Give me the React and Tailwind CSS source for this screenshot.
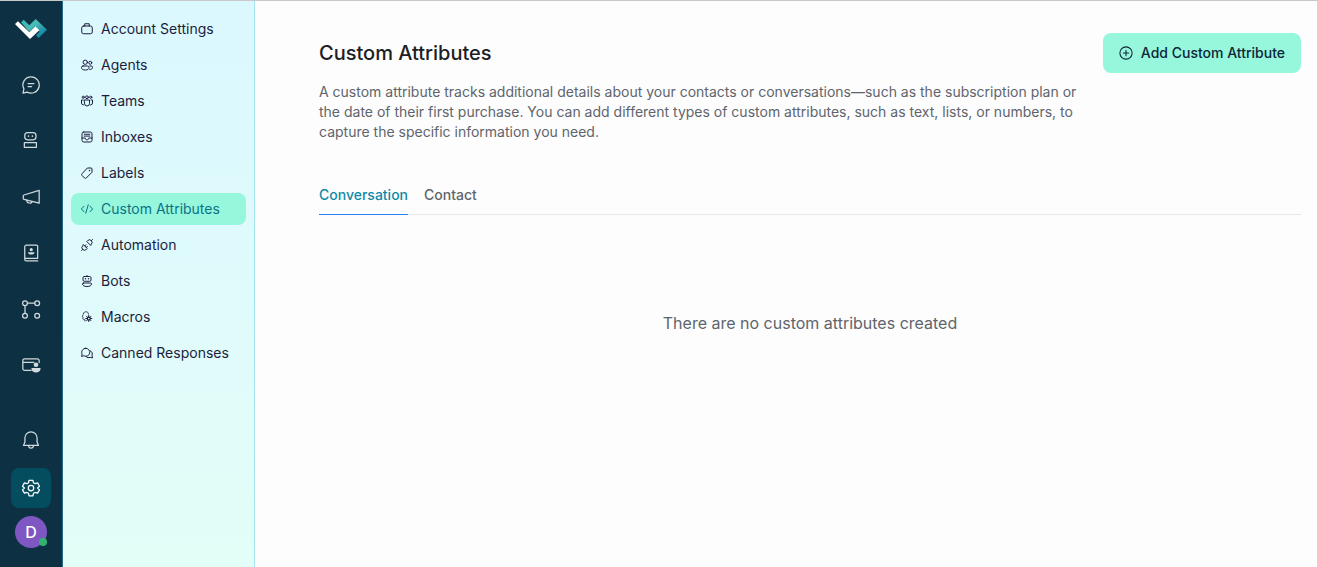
import React, { useState } from "react";

function Icon({ children, size = "size-5", width = 1.5 }) {
  return (
    <svg
      viewBox="0 0 24 24"
      className={`${size} shrink-0`}
      fill="none"
      stroke="currentColor"
      strokeWidth={width}
      strokeLinecap="round"
      strokeLinejoin="round"
      aria-hidden="true"
    >
      {children}
    </svg>
  );
}

const railItems = [
  {
    name: "Conversations",
    art: (
      <>
        <path d="M12 2.2a9.8 9.8 0 1 1-4.6 18.4L2.4 21.7l1.1-5A9.8 9.8 0 0 1 12 2.2Z" />
        <path d="M8.5 10.2h7M8.5 13.8h4.2" />
      </>
    ),
  },
  {
    name: "Captain",
    art: (
      <>
        <rect x="4.5" y="2" width="13.5" height="8.5" rx="3.5" />
        <path d="M4 14h14.500v5.500H4z" />
        <path d="M9 6.200v.1M13.700 6.200v.1" strokeWidth="2" />
      </>
    ),
  },
  {
    name: "Campaigns",
    art: (
      <>
        <path d="M21.8 4v15.4L3.6 14.8a1 1 0 0 1-.9-1v-3.2a1 1 0 0 1 .8-1L21.8 4Z" />
        <path d="M7 15.8a3.4 3.4 0 0 0 6.4 1.7" />
      </>
    ),
  },
  {
    name: "Contacts",
    art: (
      <>
        <path d="M20 17.5V4a1.5 1.5 0 0 0-1.5-1.5h-12A2 2 0 0 0 4.5 4.5v15a2 2 0 0 0 2 2H20M4.5 18.5H20v-1" />
        <circle cx="12.3" cy="8" r="1.9" fill="currentColor" stroke="none" />
        <path d="M8.5 11h7.6v.8c0 2.8-7.6 2.8-7.6 0Z" fill="currentColor" stroke="none" />
      </>
    ),
  },
  {
    name: "Flows",
    art: (
      <>
        <circle cx="4.8" cy="5" r="2.9" />
        <circle cx="19.4" cy="5" r="2.9" />
        <circle cx="4.8" cy="20" r="2.9" />
        <circle cx="19.4" cy="20" r="2.9" />
        <path d="M7.7 5h8.8M4.8 7.9v9.2" />
      </>
    ),
  },
  {
    name: "Portals",
    art: (
      <>
        <path d="M12 18.5H4.5a2.3 2.3 0 0 1-2.3-2.3V6.8a2.3 2.3 0 0 1 2.3-2.3h15a2.3 2.3 0 0 1 2.3 2.3V9M2.5 8.8h13" />
        <circle cx="18" cy="11.7" r="2.8" fill="currentColor" stroke="none" />
        <path d="M12.6 15.5h10.8v1.3c0 5.5-10.8 5.5-10.8 0Z" fill="currentColor" stroke="none" />
      </>
    ),
  },
];

const menuItems = [
  {
    name: "Account Settings",
    art: (
      <>
        <rect x="1.5" y="6" width="21" height="15.5" rx="3.5" />
        <path d="M7.5 6V1.500h9V6" />
      </>
    ),
  },
  {
    name: "Agents",
    art: (
      <>
        <circle cx="8.5" cy="6.5" r="4.3" />
        <circle cx="18.5" cy="7.5" r="3" />
        <path d="M4 14h9a3 3 0 0 1 3 3c0 3.5-3 5-7.5 5S1 20.5 1 17a3 3 0 0 1 3-3ZM17.5 14h3a2.5 2.5 0 0 1 2.5 2.5c0 3-2 4.5-5.5 4.5" />
      </>
    ),
  },
  {
    name: "Teams",
    art: (
      <>
        <circle cx="12" cy="4.5" r="2.800" />
        <circle cx="4.5" cy="4.5" r="2.2" />
        <circle cx="19.5" cy="4.5" r="2.2" />
        <path d="M7 10h10v7a5 5 0 0 1-10 0ZM4 10H1v6a4 4 0 0 0 4 4M20 10H23v6a4 4 0 0 1-4 4" />
      </>
    ),
  },
  {
    name: "Inboxes",
    art: (
      <>
        <rect x="2" y="2" width="20" height="20" rx="3.5" />
        <path d="M2 14h6.5c0 5 7 5 7 0H22M6.5 6.5h11M6.5 10.2h11" />
      </>
    ),
  },
  {
    name: "Labels",
    art: (
      <>
        <path d="M13.5 2H20a2 2 0 0 1 2 2v6.5L10.5 22a2.4 2.4 0 0 1-3.4 0L2 16.9a2.4 2.4 0 0 1 0-3.4Z" />
        <path d="M17 7v.1" strokeWidth="3" />
      </>
    ),
  },
  {
    name: "Custom Attributes",
    art: <path d="M6 6.5.8 12 6 17.5M18 6.5l5.2 5.5-5.2 5.5M14.5 3.5l-5 17" />,
  },
  {
    name: "Automation",
    art: (
      <>
        <path d="m5 11.500 7.500 7.500-1.800 1.800a5 5 0 0 1-7.400-7.400ZM19 12.500l-7.500-7.500 1.800-1.800a5 5 0 0 1 7.400 7.400Z" />
        <path d="M3.200 20.800 1 23M20.800 3.200 23 1M7.500 14l2.500-2.500M10.500 17l2.500-2.500" />
      </>
    ),
  },
  {
    name: "Bots",
    art: (
      <>
        <rect x="4" y="3" width="16" height="9.5" rx="2.5" />
        <path d="M12 3V1M5 16h14a2 2 0 0 1 2 2c0 3-3.5 5-9 5s-9-2-9-5a2 2 0 0 1 2-2Z" />
        <path d="M9 7.5v.1M15 7.5v.1" strokeWidth="3" />
      </>
    ),
  },
  {
    name: "Macros",
    art: (
      <>
        <path
          d="M8 20v-2.500H6a2 2 0 0 1-2-2V12l-1.500-1L4.500 7c.5-4 2.500-5.500 5.500-5.500S14.500 3 15 6.500"
          strokeDasharray="4 2"
          strokeWidth="1.700"
        />
        <circle cx="15.500" cy="15" r="3" strokeWidth="2.500" />
        <path
          d="M15.500 9v2.500M15.500 18.500V21M9.500 15H12M19 15h2.500M11.300 10.800l1.700 1.700M18 17.500l1.700 1.700M19.700 10.800 18 12.500M13 17.500l-1.700 1.700"
          strokeWidth="2"
        />
      </>
    ),
  },
  {
    name: "Canned Responses",
    art: (
      <>
        <path d="M9.5 2.5a8 8 0 1 1-3.8 15L1 18.8l1.3-4.5A8 8 0 0 1 9.5 2.5Z" />
        <path d="M18.5 7.5a7.3 7.3 0 0 1 3.6 9.8l.9 4.5-4.5-1a7.5 7.5 0 0 1-8.5-1.5" />
      </>
    ),
  },
];

function Logo() {
  return (
    <svg viewBox="0 0 96 60" className="h-5 w-8" role="img" aria-label="Home">
      <defs>
        <linearGradient id="brand" x1="0" y1="0" x2="1" y2="1">
          <stop offset="0" stopColor="#35b5b0" />
          <stop offset="0.4" stopColor="#4bbdb8" />
          <stop offset="0.9" stopColor="#067da0" />
        </linearGradient>
      </defs>
      <path d="m18 10 8-8 17 17L62 0l34 32-25 25-8-8 11-11-14-16-17 17Z" fill="url(#brand)" />
      <path d="m0 15 9-8 34 33 18-18 12 12-28 26Z" fill="#fff" />
    </svg>
  );
}

function Rail() {
  return (
    <nav
      aria-label="Main"
      className="flex w-[63px] shrink-0 flex-col items-center border-r border-[#256b88] bg-[#0d3042] pt-[18px] pb-[19px] text-[#d3dadd]"
    >
      <a href="#home">
        <Logo />
      </a>
      <div className="mt-[26px] flex flex-col gap-4">
        {railItems.map((item) => (
          <button
            key={item.name}
            type="button"
            aria-label={item.name}
            className="flex size-10 items-center justify-center rounded-lg"
          >
            <Icon>{item.art}</Icon>
          </button>
        ))}
      </div>
      <div className="mt-auto flex flex-col items-center gap-2">
        <button type="button" aria-label="Notifications" className="flex size-10 items-center justify-center rounded-lg">
          <Icon>
            <path d="M12 2.2a7.3 7.3 0 0 0-7.3 7.3v5L3 18.5h18l-1.7-4v-5A7.3 7.3 0 0 0 12 2.2ZM9 18.7a3 3 0 0 0 6 0" />
          </Icon>
        </button>
        <button
          type="button"
          aria-label="Settings"
          className="flex size-10 items-center justify-center rounded-lg bg-[#044c60] text-white"
        >
          <Icon>
            <path d="M9.7 2.7h4.6l.7 3 1.9 1.1 3-.9 2.3 4-2.3 2.1 2.3 2.2-2.3 4-3-.9-1.9 1.1-.7 3H9.7l-.7-3-1.9-1.1-3 .9-2.3-4L4.1 12 1.8 9.900l2.300-4 3 .9L9 5.700Z" />
            <circle cx="12" cy="12" r="3.300" />
          </Icon>
        </button>
        <button
          type="button"
          aria-label="Profile"
          className="relative flex size-8 items-center justify-center rounded-full bg-[#7e57c2] text-base font-medium text-white"
        >
          D
          <span className="absolute right-0 bottom-0.5 size-2 rounded-full bg-[#2fb36d]" />
        </button>
      </div>
    </nav>
  );
}

function SettingsMenu() {
  return (
    <nav
      aria-label="Settings"
      className="w-48 shrink-0 border-r border-[#a5e5ee] bg-linear-to-b from-[#dbf8ff] to-[#e3fdf7] px-2 pt-3"
    >
      <ul className="flex flex-col gap-1">
        {menuItems.map((item) => {
          const active = item.name === "Custom Attributes";
          return (
            <li key={item.name}>
              <a
                href="#settings"
                aria-current={active ? "page" : undefined}
                className={`flex h-8 items-center gap-2 rounded-lg px-2.5 text-sm ${
                  active ? "bg-[#96f7dc] text-[#0b7285]" : "text-[#1c1d3d]"
                }`}
              >
                <Icon size="size-3" width={2}>
                  {item.art}
                </Icon>
                {item.name}
              </a>
            </li>
          );
        })}
      </ul>
    </nav>
  );
}

export default function App() {
  const [tab, setTab] = useState("Conversation");
  return (
    <div className="flex min-h-screen border-t border-[#c8c8c8] bg-[#fdfdfd] font-['Inter',sans-serif] text-[#60646c]">
      <Rail />
      <SettingsMenu />
      <main className="min-w-0 flex-1 pt-8 pr-4 pl-16">
        <header className="flex items-start justify-between gap-6">
          <div className="flex max-w-[760px] flex-col gap-[9px]">
            <h1 className="text-xl leading-10 font-medium text-[#1c2024]">Custom Attributes</h1>
            <p className="text-sm leading-5">
              A custom attribute tracks additional details about your contacts or conversations—such as the subscription
              plan or the date of their first purchase. You can add different types of custom attributes, such as text,
              lists, or numbers, to capture the specific information you need.
            </p>
          </div>
          <button
            type="button"
            className="flex h-10 shrink-0 items-center gap-2 rounded-lg bg-[#96f7dc] px-4 text-sm font-medium text-[#0d2636]"
          >
            <Icon size="size-3.5" width={1.8}>
              <circle cx="12" cy="12" r="10.5" />
              <path d="M12 7.5v9M7.5 12h9" />
            </Icon>
            Add Custom Attribute
          </button>
        </header>
        <div role="tablist" className="mt-8 flex gap-4 border-b border-[#e8e8ec]">
          {["Conversation", "Contact"].map((name) => (
            <button
              key={name}
              type="button"
              role="tab"
              aria-selected={tab === name}
              onClick={() => setTab(name)}
              className={`-mb-px border-b pt-[11px] pb-[9px] text-sm font-medium ${
                tab === name ? "border-b-[#2781f6] text-[#0d8aa8]" : "border-b-transparent text-[#60646c]"
              }`}
            >
              {name}
            </button>
          ))}
        </div>
        <p className="mt-24 text-center text-base">There are no custom attributes created</p>
      </main>
    </div>
  );
}
